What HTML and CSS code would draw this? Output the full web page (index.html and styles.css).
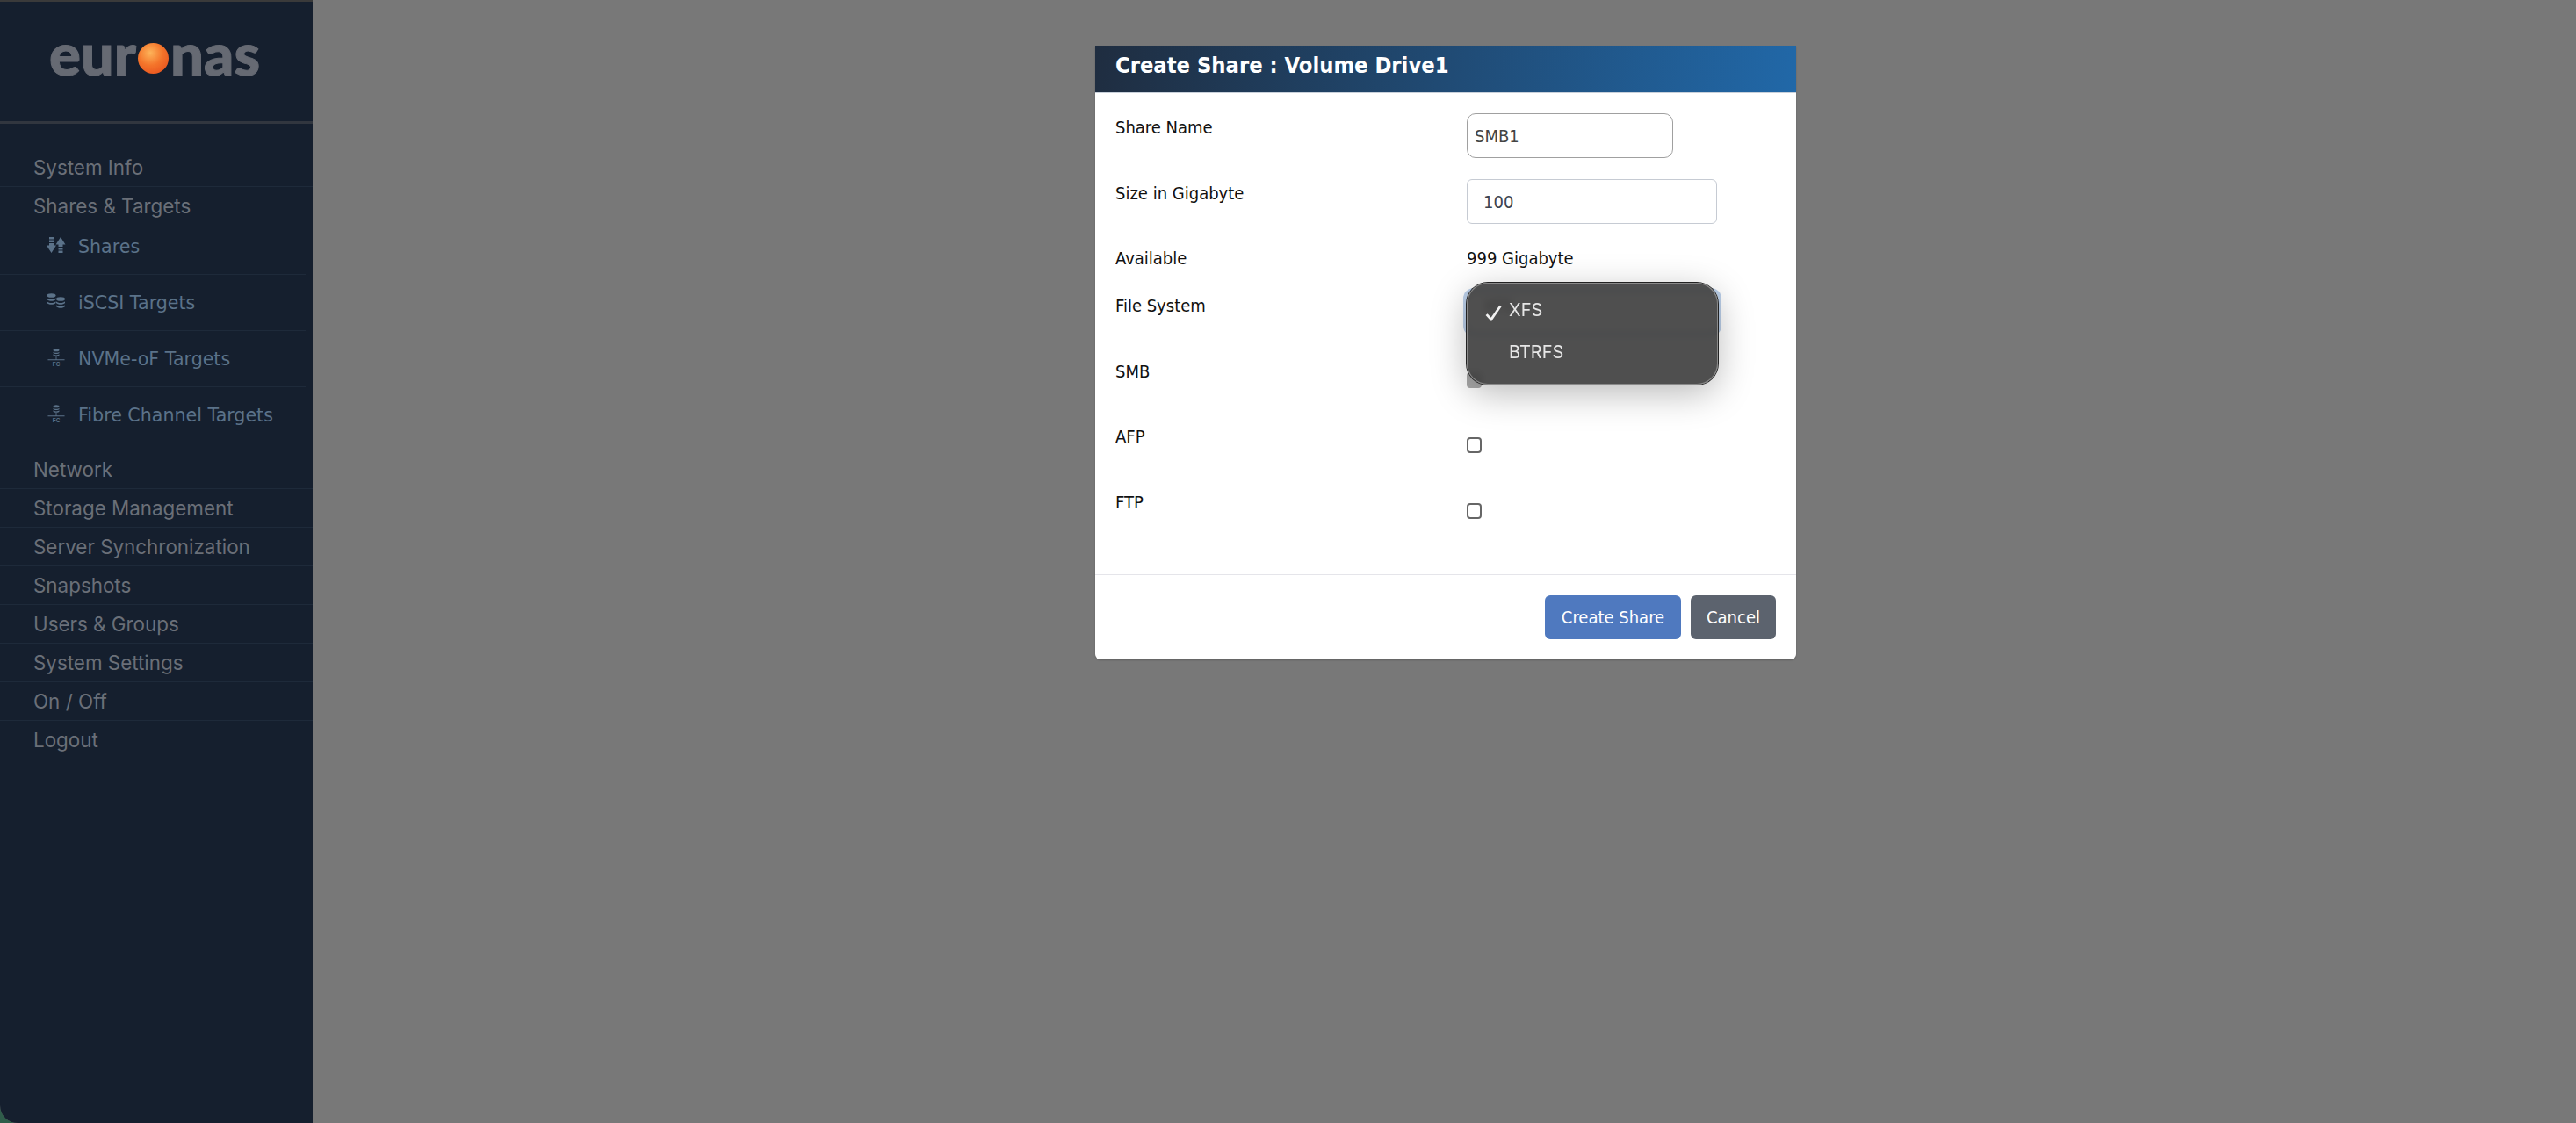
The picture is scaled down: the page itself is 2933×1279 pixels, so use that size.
FILE: index.html
```html
<!DOCTYPE html>
<html lang="en">
<head>
    <meta charset="UTF-8">
    <title>euronas</title>
    <link rel="stylesheet" href="styles.css">
</head>
<body>
<div class="window">
    <aside class="sidebar">
        <div class="logo"><span>eur</span><i class="ball"></i><span>nas</span></div>
        <ul class="menu">
            <li>System Info</li>
            <li class="open">Shares &amp; Targets
                <ul class="submenu">
                    <li>
                        <svg class="icon" viewBox="0 0 22 18"><path d="M3 0h5v2.500H3zM3 3.500h5V6H3zM3 7h5v2.500h3L5.500 18 0 9.500h3z"/><path d="M16 0l5.500 8.500h-3V11h-5V8.500h-3zM13.500 12h5v2.500h-5zM13.500 15.500h5V18h-5z"/></svg>
                        Shares
                    </li>
                    <li>
                        <svg class="icon" viewBox="0 0 22 18"><ellipse cx="5.500" cy="2.500" rx="5" ry="2.300"/><path d="M.5 5.200c1.500 2.400 8.500 2.400 10 0V7c-1.500 2.400-8.500 2.400-10 0zM.5 9.200c1.500 2.400 8.500 2.400 10 0V11c-1.500 2.400-8.500 2.400-10 0z"/><ellipse cx="16" cy="6.500" rx="5" ry="2.300"/><path d="M11 9.200c1.500 2.400 8.500 2.400 10 0V11c-1.500 2.400-8.500 2.400-10 0zM11 13.200c1.500 2.400 8.500 2.400 10 0V15c-1.500 2.400-8.500 2.400-10 0z"/></svg>
                        iSCSI Targets
                    </li>
                    <li>
                        <svg class="icon" viewBox="0 0 22 22"><ellipse cx="11" cy="2" rx="3.800" ry="1.700"/><path d="M7.200 4c1 1.500 6.600 1.500 7.600 0v1.500c-1 1.500-6.600 1.500-7.600 0zM7.200 7c1 1.500 6.600 1.500 7.600 0v1.500c-1 1.500-6.600 1.500-7.600 0zM10.500 10h1v3.500h10v1H.5v-1h10z"/><text x="11" y="22" text-anchor="middle" class="fc">FC</text></svg>
                        NVMe-oF Targets
                    </li>
                    <li>
                        <svg class="icon" viewBox="0 0 22 22"><ellipse cx="11" cy="2" rx="3.800" ry="1.700"/><path d="M7.200 4c1 1.500 6.600 1.500 7.600 0v1.500c-1 1.500-6.600 1.500-7.600 0zM7.200 7c1 1.500 6.600 1.500 7.600 0v1.500c-1 1.500-6.600 1.500-7.600 0zM10.500 10h1v3.500h10v1H.5v-1h10z"/><text x="11" y="22" text-anchor="middle" class="fc">FC</text></svg>
                        Fibre Channel Targets
                    </li>
                </ul>
            </li>
            <li>Network</li>
            <li>Storage Management</li>
            <li>Server Synchronization</li>
            <li>Snapshots</li>
            <li>Users &amp; Groups</li>
            <li>System Settings</li>
            <li>On / Off</li>
            <li>Logout</li>
        </ul>
    </aside>
    <main class="main">
        <div class="modal">
            <h1 class="modal-title">Create Share : Volume Drive1</h1>
            <div class="modal-body">
                <div class="row">
                    <label>Share Name</label>
                    <div class="field name-field">SMB1</div>
                </div>
                <div class="row">
                    <label>Size in Gigabyte</label>
                    <div class="field size-field">100</div>
                </div>
                <div class="row row-short">
                    <label>Available</label>
                    <div class="value">999 Gigabyte</div>
                </div>
                <div class="row">
                    <label>File System</label>
                    <div class="select-wrap">
                        <div class="select">XFS</div>
                        <div class="popup">
                            <div class="option">
                                <svg class="check" viewBox="0 0 18 18"><path d="M1.500 10.500L6.500 16 16.500 1.500" fill="none" stroke="#f2f2f2" stroke-width="2.600"/></svg>
                                XFS
                            </div>
                            <div class="option">BTRFS</div>
                        </div>
                    </div>
                </div>
                <div class="row">
                    <label>SMB</label>
                    <div class="box box-on"></div>
                </div>
                <div class="row">
                    <label>AFP</label>
                    <div class="box"></div>
                </div>
                <div class="row">
                    <label>FTP</label>
                    <div class="box"></div>
                </div>
            </div>
            <div class="modal-footer">
                <button class="btn btn-blue">Create Share</button>
                <button class="btn btn-grey">Cancel</button>
            </div>
        </div>
    </main>
</div>
</body>
</html>
```

FILE: styles.css
```css
* {
    margin: 0;
    padding: 0;
    box-sizing: border-box;
    list-style: none;
}

html, body {
    height: 100%;
    overflow: hidden;
    background-color: #2f5d4a;
}

.window {
    display: flex;
    height: 100vh;
    background-color: #787878;
    border-bottom-left-radius: 20px;
    overflow: hidden;
}

/* sidebar */
.sidebar {
    width: 356px;
    flex: none;
    background-color: #151f2e;
    border-top: 2px solid #3a3a3a;
    font-family: Inter, "Liberation Sans", sans-serif;
    font-size: 22.400px;
    color: #6a6f78;
}

.logo {
    height: 139px;
    padding: 25px 4px 0 0;
    display: flex;
    justify-content: center;
    align-items: flex-start;
    font-family: Lato, "Open Sans", sans-serif;
    font-weight: 900;
    font-size: 67px;
    line-height: 66px;
    color: #666a73;
    -webkit-text-stroke: 1px #666a73;
    border-bottom: 3px solid #31363f;
}

.ball {
    width: 35px;
    height: 35px;
    margin: 22px 2px 0;
    border-radius: 50%;
    background: radial-gradient(circle at 40% 32%, #fdb45a 0, #f4742a 45%, #e4471a 100%);
}

.menu {
    padding-top: 28px;
}

.menu > li {
    min-height: 44px;
    padding: 6px 0 0 38px;
    line-height: 32px;
    border-bottom: 1px solid #1e2a3a;
}

.menu > .open {
    padding-bottom: 7px;
}

.submenu {
    margin: -2px 8px 0 -38px;
}

.submenu li {
    height: 64px;
    padding-left: 53px;
    display: flex;
    align-items: center;
    font-family: "DejaVu Sans", sans-serif;
    font-size: 20.600px;
    color: #5b7289;
    border-bottom: 1px solid #1e2a3a;
}

.icon {
    width: 22px;
    height: 20px;
    margin-right: 14px;
    flex: none;
    fill: #5b7289;
    position: relative;
    top: -2px;
}

.fc {
    font: 700 7px "Liberation Sans", sans-serif;
}

/* dialog */
.main {
    flex: 1;
    display: flex;
    justify-content: center;
    padding: 52px 0 0 3px;
    align-items: flex-start;
}

.modal {
    width: 798px;
    background-color: #fff;
    border-radius: 0 0 6px 6px;
    box-shadow: 0 1px 2px rgba(0, 0, 0, .2);
    font-family: "DejaVu Sans Condensed", "DejaVu Sans", sans-serif;
    font-size: 20px;
    color: #111;
}

.modal-title {
    height: 54px;
    padding: 7px 23px 0;
    font-size: 25.300px;
    line-height: 32px;
    font-weight: 700;
    color: #fff;
    background: linear-gradient(100deg, #1f2d40 0%, #2168a8 100%);
    border-bottom: 1px solid #c8d0da;
}

.modal-body {
    padding: 23px 23px 24px;
}

.row {
    display: grid;
    grid-template-columns: 400px 1fr;
    height: 74.500px;
    line-height: 32px;
}

.row-short {
    height: 54px;
}

.field {
    height: 51px;
    padding-left: 8px;
    background-color: #fff;
}

.name-field {
    width: 235px;
    padding-top: 1px;
    color: #444;
    border: 1.500px solid #a0a0a0;
    border-radius: 10px;
    line-height: 49px;
}

.size-field {
    width: 285px;
    padding-left: 18px;
    color: #3b4350;
    border: 1px solid #c6cbd3;
    border-radius: 6px;
    line-height: 50px;
}

.select-wrap {
    position: relative;
    width: 286px;
}

.select {
    height: 47px;
    padding-left: 18px;
    line-height: 30px;
    color: #333;
    border: 1px solid #aaa;
    border-radius: 8px;
    box-shadow: 0 0 0 4px #bcd0ea;
}

.popup {
    position: absolute;
    left: 0;
    top: -10px;
    width: 286px;
    height: 116px;
    padding-top: 8px;
    border-radius: 24px;
    background-color: rgba(60, 60, 60, .9);
    backdrop-filter: blur(4px);
    box-shadow: 0 0 0 1px #222, inset 0 0 0 1px #8a8a8a, 0 10px 40px rgba(0, 0, 0, .28);
    font-family: Inter, "Liberation Sans", sans-serif;
    font-size: 20px;
    color: #e6e6e6;
}

.option {
    position: relative;
    height: 48px;
    padding-left: 48px;
    line-height: 47px;
}

.check {
    position: absolute;
    left: 21px;
    top: 17px;
    width: 19px;
    height: 19px;
}

.box {
    width: 17px;
    height: 18px;
    margin-top: 17px;
    border: 2px solid #666;
    border-radius: 4px;
    background-color: #fff;
}

.box-on {
    background-color: #aaa;
    border-color: #aaa;
}

.modal-footer {
    display: flex;
    justify-content: flex-end;
    gap: 11px;
    padding: 23px 23px 23px;
    border-top: 1px solid #e5e5ea;
}

.btn {
    height: 50px;
    padding: 0 18px;
    border: 0;
    border-radius: 6px;
    font: inherit;
    color: #fff;
}

.btn-blue {
    width: 155px;
    background-color: #4f79bf;
}

.btn-grey {
    width: 97px;
    background-color: #5c636e;
}
```
